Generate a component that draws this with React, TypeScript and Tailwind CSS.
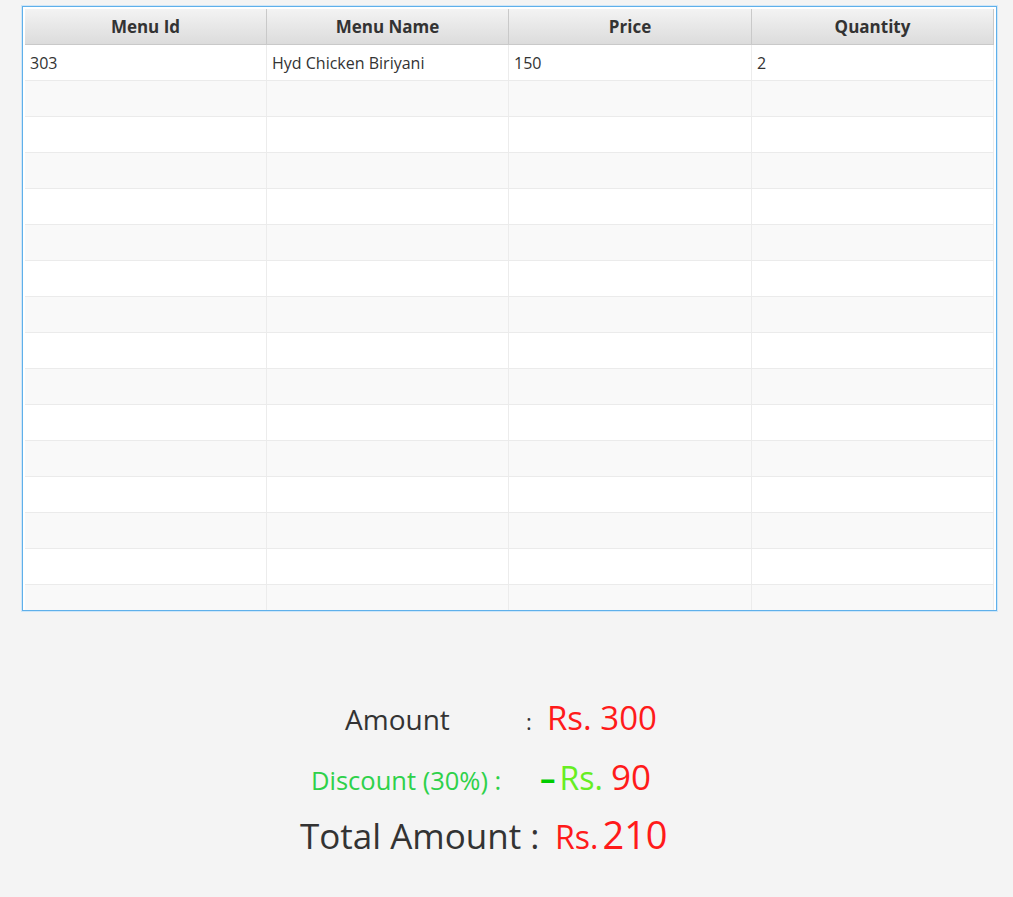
import React from 'react';

const columns = ['Menu Id', 'Menu Name', 'Price', 'Quantity'];

const rows: string[][] = [['303', 'Hyd Chicken Biriyani', '150', '2']];
const totalRows = 16;

const font = { fontFamily: '"Open Sans", "Noto Sans", sans-serif' };

const App = () => {
  const body = Array.from({ length: totalRows }, (_, i) => rows[i] ?? ['', '', '', '']);

  return (
    <div className="min-h-[897px] w-[1013px] bg-[#f4f4f4] pt-[6px]" style={font}>
      {/* table */}
      <div className="ml-[22px] h-[605px] w-[975px] overflow-hidden border border-[#5fb0ea] bg-white p-[2px] shadow-[0_0_0_1px_#cfe6f8]">
        <div className="grid grid-cols-[242px_242px_243px_242px]">
          {columns.map((c) => (
            <div
              key={c}
              className="flex h-[36px] items-center justify-center border-r border-b border-[#c9c9c9] bg-gradient-to-b from-[#f3f3f3] to-[#dcdcdc] text-[17px] font-bold text-[#333]"
            >
              {c}
            </div>
          ))}
        </div>
        {body.map((r, i) => (
          <div
            key={i}
            className={`grid h-[36px] grid-cols-[242px_242px_243px_242px] border-b border-[#ebebeb] ${i % 2 === 0 ? 'bg-white' : 'bg-[#f9f9f9]'}`}
          >
            {r.map((cell, j) => (
              <div key={j} className="flex items-center border-r border-[#ececec] pl-[5px] text-[16px] text-[#333]">
                {cell}
              </div>
            ))}
          </div>
        ))}
      </div>

      {/* totals */}
      <div className="mt-[82px] flex flex-col">
        <div className="flex h-[48px] items-baseline">
          <span className="ml-[345px] w-[181px] text-[28px] text-[#333]">Amount</span>
          <span className="w-[21px] text-[22px] text-[#333]">:</span>
          <span className="text-[33px] text-[#ff1a1a]">Rs. 300</span>
        </div>
        <div className="mt-[10px] flex h-[48px] items-baseline">
          <span className="ml-[311px] w-[229px] text-[25.5px] text-[#2ed14a]">Discount (30%) :</span>
          <span className="text-[31px] font-bold text-[#00cc00]">–</span>
          <span className="ml-[4px] text-[32px] text-[#66ee22]">Rs.</span>
          <span className="ml-[8px] text-[35px] text-[#ff1a1a]">90</span>
        </div>
        <div className="mt-[7px] flex h-[56px] items-baseline">
          <span className="ml-[300px] w-[255px] text-[35px] text-[#333]">Total Amount :</span>
          <span className="text-[32px] text-[#ff1a1a]">Rs.</span>
          <span className="ml-[4px] text-[38px] text-[#ff1a1a]">210</span>
        </div>
      </div>
    </div>
  );
};

export default App;
